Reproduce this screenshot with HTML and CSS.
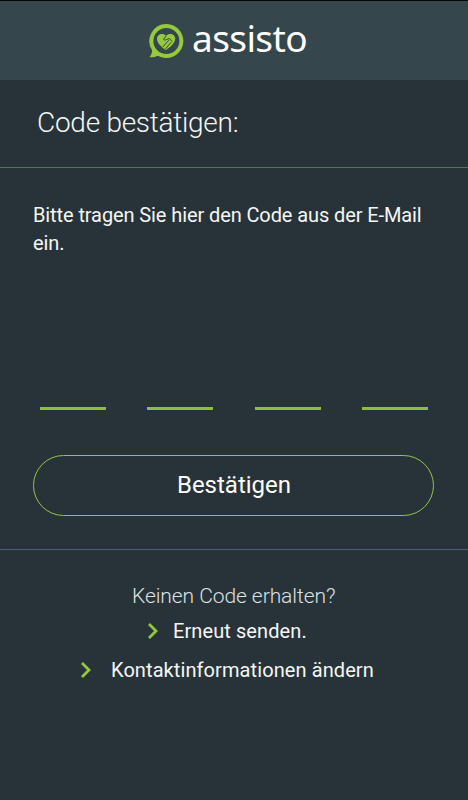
FILE: index.html
```html
<!DOCTYPE html>
<html lang="de">
<head>
<meta charset="utf-8">
<title>assisto</title>
<link rel="stylesheet" href="styles.css">
</head>
<body>
<header class="topbar">
  <svg class="logo" viewBox="0 0 36 36" width="36" height="36" aria-hidden="true">
    <path class="lime" fill-rule="evenodd" d="M18.400 1A17 17 0 1 1 9.800 32.700Q6.500 34.500 1.600 34.300Q4.300 31 4.100 27.300A17 17 0 0 1 18.400 1ZM18.400 5A13 13 0 1 0 18.400 31A13 13 0 0 0 18.400 5Z"/>
    <path class="lime" d="M18 12.700C15 9.300 9 10.900 9 15.900C9 19.800 13.500 24 18 27C22.500 24 27.200 19.800 27.200 15.800C27.200 10.900 21.400 9.300 18 12.700Z"/>
    <path class="cut" d="M18.300 12.500L15.500 16.300Q16.700 18 18.500 16.500L21.500 15.500L24 18.500M20.800 17.200L14.800 24M23.200 19.200L17.400 26"/>
  </svg>
  <span class="brand">assisto</span>
</header>
<main>
  <h1 class="title"><span>Code bestätigen:</span></h1>
  <section class="form">
    <p class="hint">Bitte tragen Sie hier den Code aus der E-Mail ein.</p>
    <div class="code"><i></i><i></i><i></i><i></i></div>
    <button class="confirm" type="button"><span>Bestätigen</span></button>
  </section>
  <section class="help">
    <p class="question">Keinen Code erhalten?</p>
    <a class="link resend"><svg class="chevron" viewBox="0 0 12 18" width="12" height="18"><path d="M2 2L9 9L2 16"/></svg><span>Erneut senden.</span></a>
    <a class="link contact"><svg class="chevron" viewBox="0 0 12 18" width="12" height="18"><path d="M2 2L9 9L2 16"/></svg><span>Kontaktinformationen ändern</span></a>
  </section>
</main>
</body>
</html>
```
FILE: styles.css
```css
* { box-sizing: border-box; }
body {
  margin: 0;
  height: 800px;
  overflow: hidden;
  background: #283339;
  color: #f4f7f7;
  font-family: Roboto, sans-serif;
}
p, h1 { margin: 0; }
.topbar {
  display: flex;
  height: 80px;
  padding: 22px 0 0 148px;
  border-top: 1px solid #000;
  background: #35474d;
}
.logo { flex: none; }
.lime { fill: #97c93c; }
.cut { fill: none; stroke: #35474d; stroke-width: 1; }
.brand {
  margin: -10px 0 0 8px;
  font: 37px/50px "Noto Sans", sans-serif;
  letter-spacing: -0.6px;
  color: #fff;
}
.title {
  height: 88px;
  padding: 26px 0 0 37px;
  border-bottom: 1px solid #56783a;
  font-size: 28px;
  line-height: 34px;
  font-weight: 300;
  letter-spacing: -0.27px;
}
.form {
  height: 381px;
  padding: 33px 33px 0;
}
.hint {
  height: 206px;
  font-size: 20px;
  line-height: 28px;
  letter-spacing: -0.1px;
}
.code {
  display: flex;
  justify-content: space-between;
  padding: 0 7px;
}
.code i { width: 66px; height: 3px; background: #8dbf3b; }
.confirm {
  display: block;
  width: 401px;
  height: 61px;
  margin-top: 45px;
  padding: 0 0 2px 1px;
  border: 1px solid #94c444;
  border-radius: 31px;
  background: none;
  color: #fff;
  font: 24px/28px Roboto, sans-serif;
}
.help {
  display: flex;
  flex-direction: column;
  padding-top: 34px;
  border-top: 1px solid #4b6c38;
}
.question {
  padding-left: 132px;
  font-size: 21px;
  line-height: 24px;
  font-weight: 300;
  letter-spacing: -0.07px;
  color: #dce1e2;
}
.link {
  display: flex;
  align-items: center;
  font-size: 20px;
  line-height: 24px;
  letter-spacing: 0.09px;
  white-space: nowrap;
}
.resend { margin: 11px 0 0 147px; gap: 14px; }
.contact { margin: 15px 0 0 80px; gap: 19px; }
.chevron { fill: none; stroke: #94ca3a; stroke-width: 2.8; }
```
